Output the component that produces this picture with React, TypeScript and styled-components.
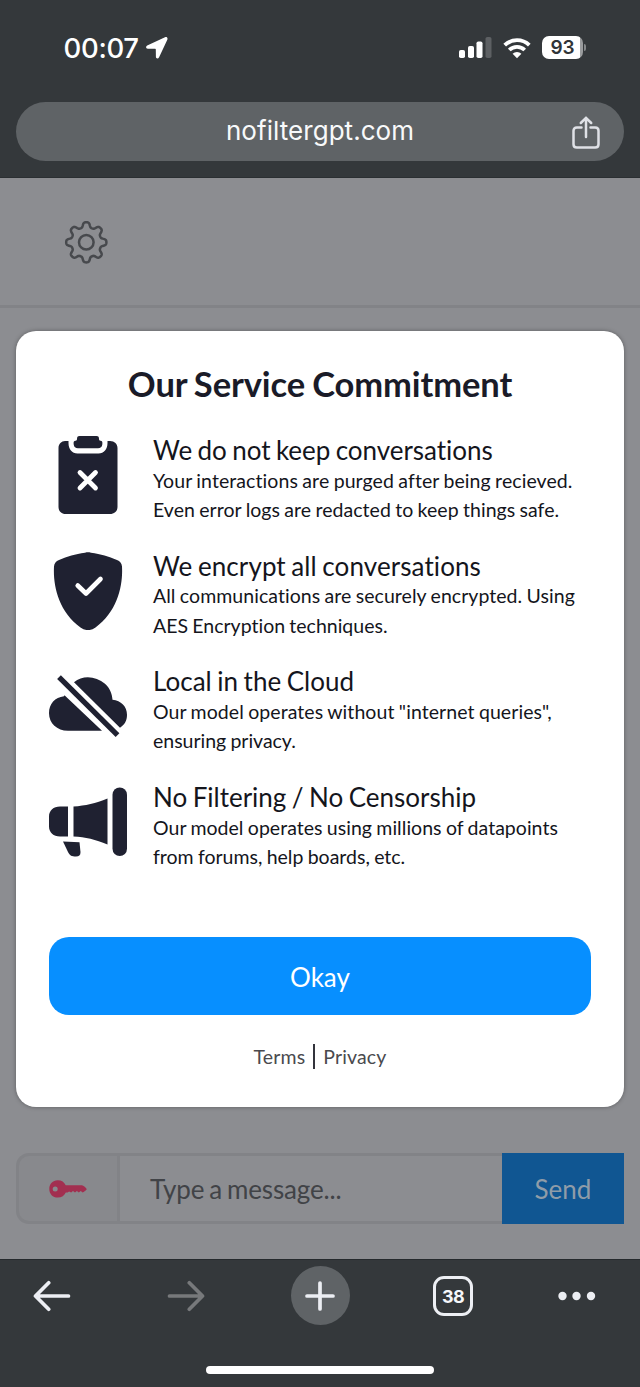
import React from "react";
import styled, { createGlobalStyle } from "styled-components";

const GlobalStyle = createGlobalStyle`
  *, *::before, *::after { box-sizing: border-box; }
  body { margin: 0; background: #34383b; }
  button { font: inherit; letter-spacing: inherit; border: 0; padding: 0; background: none; }
  svg { display: block; flex: none; }
`;

const Screen = styled.div`
  width: 640px;
  height: 1387px;
  display: flex;
  flex-direction: column;
  overflow: hidden;
  background: #34383b;
  font-family: Lato, "Liberation Sans", sans-serif;
  font-variant-ligatures: none;
`;

const BrowserTop = styled.header`
  height: 178px;
  display: flex;
  flex-direction: column;
  font-family: Inter, "Liberation Sans", sans-serif;
  color: #fff;
  border-bottom: 1px solid #2b2f32;
`;

const StatusBar = styled.div`
  height: 102px;
  padding: 0 54px 7px 63.5px;
  display: flex;
  align-items: center;
  justify-content: space-between;
`;

const StatusGroup = styled.div<{ $gap: number }>`
  display: flex;
  align-items: center;
  gap: ${({ $gap }) => $gap}px;
`;

const Clock = styled.span`
  font-size: 27.5px;
  line-height: 32px;
  font-weight: 500;
  letter-spacing: -0.3px;
`;

const Battery = styled.div`
  display: flex;
  align-items: center;
  gap: 1px;
`;

const BatteryBody = styled.div`
  width: 41px;
  height: 23px;
  border-radius: 7px;
  background: linear-gradient(to right, #fff 38px, #9a9c9e 38px);
  color: #303437;
  font-size: 19px;
  line-height: 23px;
  font-weight: 600;
  text-align: center;
`;

const BatteryCap = styled.div`
  width: 2px;
  height: 7px;
  border-radius: 0 3px 3px 0;
  background: #85888a;
`;

const AddressBar = styled.div`
  height: 59px;
  margin: 0 16px;
  padding: 0 22px;
  border-radius: 30px;
  background: #5f6366;
  display: grid;
  grid-template-columns: 32px 1fr 32px;
  align-items: center;
  justify-items: center;
  text-align: center;
  font-size: 26px;
  line-height: 32px;
  letter-spacing: 0.05px;
  color: #f8f9fa;
`;

const Host = styled.span`
  padding-bottom: 2px;
`;

const Page = styled.main`
  position: relative;
  height: 1081px;
  display: flex;
  flex-direction: column;
  background: #8c8d91;
`;

const PageHeader = styled.div`
  height: 129.5px;
  border-bottom: 3px solid #828387;
  padding: 43px 64px;
`;

const Composer = styled.form`
  margin: auto 16px 35px;
  height: 71px;
  display: flex;
`;

const KeyBox = styled.div`
  width: 104px;
  border: 3px solid #828387;
  border-radius: 13px 0 0 13px;
  background: #88898d;
  display: flex;
  align-items: center;
  justify-content: center;
`;

const MessageField = styled.div`
  flex: 1;
  border: solid #828387;
  border-width: 3px 0;
  padding: 1px 0 0 30px;
  display: flex;
  align-items: center;
  font-size: 26px;
  letter-spacing: -0.15px;
  word-spacing: -1.5px;
  color: #414347;
`;

const SendButton = styled.button`
  width: 122px;
  padding-top: 1px;
  background: #105692;
  color: #8f9ca8;
  font-size: 26px;
`;

const Dialog = styled.section`
  position: absolute;
  left: 16px;
  right: 16px;
  top: 153px;
  height: 775.5px;
  padding: 0 33px;
  border-radius: 20px;
  background: #fff;
  box-shadow: 0 0 4px rgba(0, 0, 0, 0.35);
  color: #1a1b28;
  display: flex;
  flex-direction: column;
`;

const DialogTitle = styled.h1`
  margin: 32px 0 31px;
  font-size: 34.5px;
  line-height: 42px;
  font-weight: 700;
  letter-spacing: -0.1px;
  word-spacing: -1.2px;
  text-align: center;
`;

const CommitmentList = styled.ul`
  list-style: none;
  margin: 0;
  padding: 0;
  display: flex;
  flex-direction: column;
  gap: 27px;
  color: #14151c;
`;

const Commitment = styled.li`
  display: flex;
  gap: 26px;
  height: 88.7px;
`;

const CommitmentTitle = styled.h2<{ $track: number }>`
  margin: 0;
  font-size: 26px;
  line-height: 29.7px;
  font-weight: 400;
  white-space: nowrap;
  word-spacing: -1.2px;
  letter-spacing: ${({ $track }) => $track}px;
`;

const CommitmentText = styled.p<{ $track: number }>`
  margin: 0;
  font-size: 19.5px;
  line-height: 29.3px;
  white-space: nowrap;
  word-spacing: -0.7px;
  letter-spacing: ${({ $track }) => $track}px;
`;

const OkayButton = styled.button`
  margin-top: 65px;
  padding-top: 2px;
  height: 78px;
  flex: none;
  border-radius: 20px;
  background: #078fff;
  color: #fff;
  font-size: 26px;
`;

const Links = styled.nav`
  margin-top: 29px;
  display: flex;
  justify-content: center;
  align-items: center;
  gap: 8px;
  height: 26px;
  font-size: 19.5px;
  letter-spacing: 0.15px;
  color: #4a4a4e;
`;

const LinkDivider = styled.span`
  width: 2px;
  height: 25px;
  background: #33343c;
`;

const BrowserBottom = styled.footer`
  height: 128px;
  border-top: 1px solid #25292c;
  padding-top: 6px;
  display: flex;
  flex-direction: column;
  align-items: center;
`;

const Toolbar = styled.div`
  width: 100%;
  height: 60px;
  padding: 0 22px;
  display: grid;
  grid-template-columns: 60px 60px 60px 60px 60px;
  justify-content: space-between;
  align-items: center;
  justify-items: center;
`;

const NewTab = styled.div`
  width: 59px;
  height: 59px;
  align-self: start;
  border-radius: 50%;
  background: #5f6366;
  display: grid;
  place-items: center;
`;

const TabCount = styled.div`
  width: 40px;
  height: 40px;
  margin-right: 2px;
  border: 3.5px solid #edeff4;
  border-radius: 11px;
  display: grid;
  place-items: center;
  color: #f6f7fa;
  font: 700 18px Inter, "Liberation Sans", sans-serif;
  letter-spacing: -0.6px;
`;

const MoreButton = styled.div`
  justify-self: start;
`;

const HomeIndicator = styled.div`
  width: 228px;
  height: 8px;
  margin-top: 40px;
  border-radius: 4px;
  background: #fff;
`;

const INK = "#1f2131";

const ClipboardIcon = () => (
  <svg width="78" height="78" viewBox="0 0 78 78" fill={INK}>
    <path d="M16 5h3.500v2c0 6 3.500 10.500 9 10.500h21c5.500 0 9-4.500 9-10.500V5H61c4.500 0 7.500 3 7.500 7v59c0 4-3 7-7.500 7H16.500c-4 0-7-3-7-7V12c0-4 3-7 6.500-7Z" />
    <path d="M30.500 0h17c2 0 2.500 1 2.500 3 0 1.500 1 1.500 2.500 2 1 .5 1 1.500.8 3.500-.3 2.500-1.800 3.800-4.300 3.800H29c-2.500 0-4-1.300-4.300-3.800-.2-2-.2-3 .8-3.500C27 4.500 28 4.500 28 3c0-2 .5-3 2.500-3Z" />
    <path d="m31 36.500 15.500 15.500m0-15.500L31 52" stroke="#fff" strokeWidth="4.800" strokeLinecap="round" />
  </svg>
);

const ShieldIcon = () => (
  <svg width="78" height="78" viewBox="0 0 78 78">
    <path d="M36 .7c2-.5 4-.5 6 0 10 1.500 17.500 3.500 26 7.300 3 1.300 4.700 3 5 6.500C74 33 69 59 46.500 75.500c-5 3.500-10 3.500-15 0C9 59 4 33 5 14.500 5.300 11 7 9.300 10 8 18.500 4.200 26 2.200 36 .7Z" fill={INK} />
    <path d="m28.700 33.500 8.300 8 14.500-14.500" fill="none" stroke="#fff" strokeWidth="4.600" strokeLinecap="round" strokeLinejoin="round" />
  </svg>
);

const CloudOffIcon = () => (
  <svg width="78" height="78" viewBox="0 -0.700 78 78">
    <path d="M15.500 27.500 53 63H19C8 63 0 55.500 0 45.500c0-9.500 6-16 15-17ZM25 14.500C34 7 47 8.500 56 16c5 4.500 7 10 7.500 16C72 33 78 38.500 78 47c0 6-2.500 10-7 13Z" fill={INK} />
    <path d="m10 9.500 58.500 58" stroke={INK} strokeWidth="5.300" />
  </svg>
);

const MegaphoneIcon = () => (
  <svg width="78" height="78" viewBox="0 0 78 78" fill={INK}>
    <path d="M19 23.500v30H11C4.500 53.500 0 49.500 0 43.500v-10c0-6 4.500-10 11-10ZM24.500 23.500c12-.8 22-3 34-8v46c-12-5-22-7.500-34-8Z" />
    <rect x="63.500" y="4.500" width="14.500" height="68.500" rx="7.250" />
    <path d="m14 58.500 16.500.7 1 10c0 3-1.500 4.300-4.500 4.300-4.500 0-6-.7-8-4.500Z" />
  </svg>
);

type Line = { text: string; track: number };
type CommitmentItem = { icon: React.ReactNode; title: Line; lines: Line[] };

const commitments: CommitmentItem[] = [
  {
    icon: <ClipboardIcon />,
    title: { text: "We do not keep conversations", track: -0.03 },
    lines: [
      { text: "Your interactions are purged after being recieved.", track: 0.08 },
      { text: "Even error logs are redacted to keep things safe.", track: 0.04 },
    ],
  },
  {
    icon: <ShieldIcon />,
    title: { text: "We encrypt all conversations", track: 0.09 },
    lines: [
      { text: "All communications are securely encrypted. Using", track: 0.05 },
      { text: "AES Encryption techniques.", track: 0 },
    ],
  },
  {
    icon: <CloudOffIcon />,
    title: { text: "Local in the Cloud", track: 0.03 },
    lines: [
      { text: 'Our model operates without "internet queries",', track: 0.07 },
      { text: "ensuring privacy.", track: -0.02 },
    ],
  },
  {
    icon: <MegaphoneIcon />,
    title: { text: "No Filtering / No Censorship", track: 0 },
    lines: [
      { text: "Our model operates using millions of datapoints", track: 0.03 },
      { text: "from forums, help boards, etc.", track: 0 },
    ],
  },
];

const LocationIcon = () => (
  <svg width="22" height="22" viewBox="0 0 22 22" fill="#fff">
    <path d="M19 .3 1.200 8.500C-.5 9.500-.2 11.700 1.800 11.700l7.300.1c.5 0 .7.200.7.700l.1 7.300c0 2 2.300 2.300 3.200.5L21.300 2.700C22 1 20.800-.4 19 .3Z" />
  </svg>
);

const SignalIcon = () => (
  <svg width="33" height="22" viewBox="0 0 33 22" fill="#fff">
    <rect x="0" y="13" width="6" height="8" rx="1.800" />
    <rect x="9" y="9" width="6" height="12" rx="1.800" />
    <rect x="17.500" y="4.500" width="6" height="16.500" rx="1.800" />
    <rect x="26.500" y="0" width="6" height="21" rx="1.800" fill="#5d6063" />
  </svg>
);

const WifiIcon = () => (
  <svg width="28" height="22" viewBox="0 0 28 22" fill="none" stroke="#fff" strokeWidth="3.800">
    <path d="M1.700 8.200a17.600 17.600 0 0 1 24.600 0" />
    <path d="M6.300 13a11 11 0 0 1 15.400 0" />
    <path d="M14 21.300 9.600 16.800a6.200 6.200 0 0 1 8.800 0Z" fill="#fff" stroke="none" />
  </svg>
);

const ShareIcon = () => (
  <svg width="28" height="34" viewBox="0 0 28 34" fill="none" stroke="#dfe1e6" strokeWidth="2.500" strokeLinecap="round" strokeLinejoin="round">
    <path d="M9.500 12.500H4.800c-2.100 0-3.300 1.200-3.300 3.300v13.400c0 2.100 1.200 3.300 3.300 3.300h18.400c2.100 0 3.300-1.200 3.300-3.300V15.800c0-2.100-1.200-3.300-3.300-3.300h-4.700M14 22V2.800M8.800 8 14 2.800 19.200 8" />
  </svg>
);

const gearOutline = (() => {
  const points: string[] = [];
  for (let i = 0; i < 144; i += 1) {
    const a = (i / 144) * Math.PI * 2;
    const wave = Math.cos(8 * a);
    const r = 17.6 + (2.5 * Math.tanh(1.7 * wave)) / Math.tanh(1.7);
    points.push(`${(22.3 + r * Math.cos(a)).toFixed(2)} ${(21.3 + r * Math.sin(a)).toFixed(2)}`);
  }
  return `M${points.join("L")}Z`;
})();

const GearIcon = () => (
  <svg width="44" height="43" viewBox="0 0 44 43" fill="none" stroke="#47494d" strokeWidth="2.500" strokeLinejoin="round">
    <path d={gearOutline} />
    <circle cx="22.300" cy="21.300" r="7.300" />
  </svg>
);

const KeyIcon = () => (
  <svg width="38" height="18" viewBox="0 0 38 18">
    <path fillRule="evenodd" d="M8.700.3c4 0 6.600 2 8 4.900H33c1 0 4.700 3 4.700 3.900s-3.200 3.300-4 3.300l-2-1.500-1.900 1.600-1.900-1.500-1.900 1.500-2-1.500-1.900 1.500-2-1-1.500 1-1.800-.1c-1.500 3-4 5.100-8 5.100C3.700 17.500.3 13.800.3 8.900S3.700.3 8.700.3ZM6.200 6.400a2.500 2.500 0 1 0 0 5 2.500 2.500 0 0 0 0-5Z" fill="#a22f50" />
  </svg>
);

const ArrowIcon = ({ forward = false }: { forward?: boolean }) => (
  <svg width="38" height="32" viewBox="0 0 38 32" fill="none" stroke={forward ? "#77797b" : "#eceef3"} strokeWidth="3.700" strokeLinecap="round" strokeLinejoin="round">
    <path d={forward ? "M2.500 16h33M22.300 2.700 35.500 16 22.300 29.300" : "M35.500 16h-33M15.700 2.700 2.500 16l13.200 13.300"} />
  </svg>
);

const PlusIcon = () => (
  <svg width="30" height="30" viewBox="0 0 30 30" stroke="#eceef3" strokeWidth="3.700" strokeLinecap="round">
    <path d="M15 2v26M2 15h26" />
  </svg>
);

const MoreIcon = () => (
  <svg width="38" height="10" viewBox="0 0 38 10" fill="#eceef3">
    <circle cx="4.500" cy="5" r="4.200" />
    <circle cx="18.500" cy="5" r="4.200" />
    <circle cx="33" cy="5" r="4.200" />
  </svg>
);

export default function App() {
  return (
    <Screen>
      <GlobalStyle />
      <BrowserTop>
        <StatusBar>
          <StatusGroup $gap={7}>
            <Clock>00:07</Clock>
            <LocationIcon />
          </StatusGroup>
          <StatusGroup $gap={11}>
            <SignalIcon />
            <WifiIcon />
            <Battery>
              <BatteryBody>93</BatteryBody>
              <BatteryCap />
            </Battery>
          </StatusGroup>
        </StatusBar>
        <AddressBar>
          <span />
          <Host>nofiltergpt.com</Host>
          <ShareIcon />
        </AddressBar>
      </BrowserTop>
      <Page>
        <PageHeader>
          <GearIcon />
        </PageHeader>
        <Composer>
          <KeyBox>
            <KeyIcon />
          </KeyBox>
          <MessageField>Type a message...</MessageField>
          <SendButton type="button">Send</SendButton>
        </Composer>
        <Dialog role="dialog">
          <DialogTitle>Our Service Commitment</DialogTitle>
          <CommitmentList>
            {commitments.map(({ icon, title, lines }) => (
              <Commitment key={title.text}>
                {icon}
                <div>
                  <CommitmentTitle $track={title.track}>{title.text}</CommitmentTitle>
                  {lines.map((line) => (
                    <CommitmentText key={line.text} $track={line.track}>
                      {line.text}
                    </CommitmentText>
                  ))}
                </div>
              </Commitment>
            ))}
          </CommitmentList>
          <OkayButton>Okay</OkayButton>
          <Links>
            <span>Terms</span>
            <LinkDivider />
            <span>Privacy</span>
          </Links>
        </Dialog>
      </Page>
      <BrowserBottom>
        <Toolbar>
          <ArrowIcon />
          <ArrowIcon forward />
          <NewTab>
            <PlusIcon />
          </NewTab>
          <TabCount>38</TabCount>
          <MoreButton>
            <MoreIcon />
          </MoreButton>
        </Toolbar>
        <HomeIndicator />
      </BrowserBottom>
    </Screen>
  );
}
